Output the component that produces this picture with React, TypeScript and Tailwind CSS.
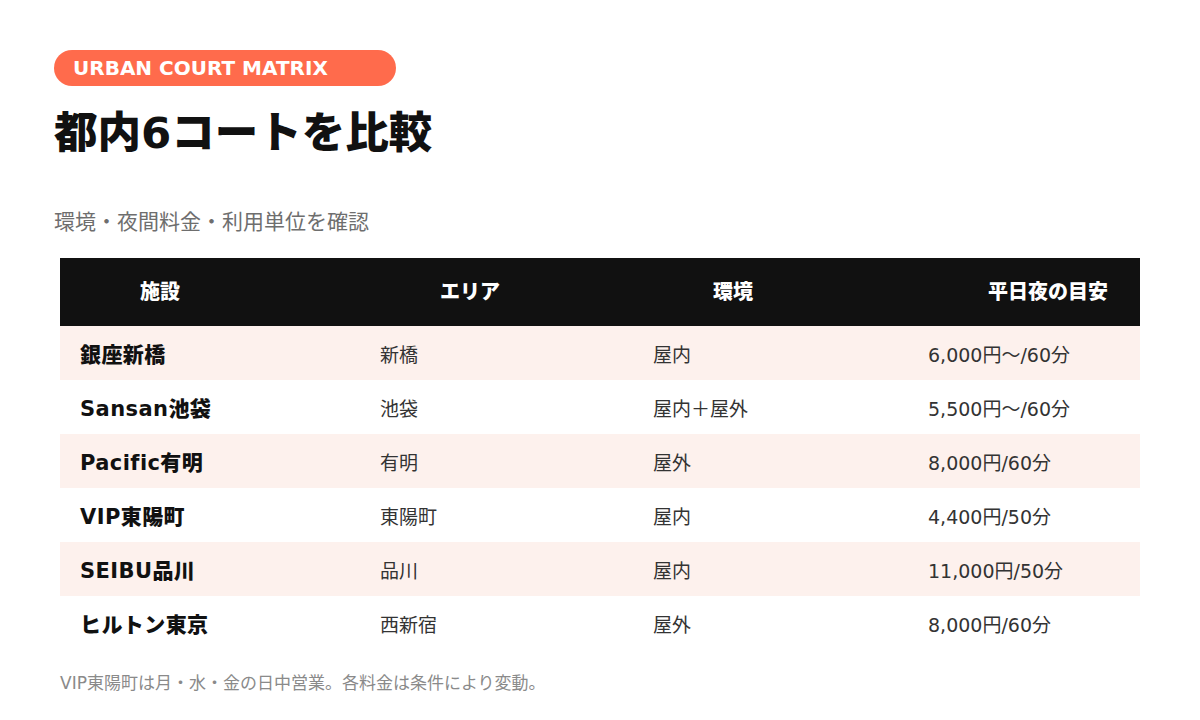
const rows = [
  { name: '銀座新橋', area: '新橋', env: '屋内', price: '6,000円〜/60分' },
  { name: 'Sansan池袋', area: '池袋', env: '屋内＋屋外', price: '5,500円〜/60分' },
  { name: 'Pacific有明', area: '有明', env: '屋外', price: '8,000円/60分' },
  { name: 'VIP東陽町', area: '東陽町', env: '屋内', price: '4,400円/50分' },
  { name: 'SEIBU品川', area: '品川', env: '屋内', price: '11,000円/50分' },
  { name: 'ヒルトン東京', area: '西新宿', env: '屋外', price: '8,000円/60分' },
]

const headers = ['施設', 'エリア', '環境', '平日夜の目安']

const font = {
  fontFamily: '"DejaVu Sans", "Noto Sans CJK JP", sans-serif',
}

const cols = 'grid grid-cols-[300px_273px_275px_232px]'

export default function App() {
  return (
    <div className="min-h-screen w-[1200px] bg-white px-[54px] pt-[50px]" style={font}>
      <div className="inline-flex h-9 w-[342px] items-center rounded-full bg-[#ff6b4c] pl-[19px]">
        <span className="text-[20px] font-bold text-white">URBAN COURT MATRIX</span>
      </div>

      <h1 className="mt-[21px] text-[43.5px] font-black leading-[52px] text-[#111111]">都内6コートを比較</h1>

      <p className="mt-[49px] text-[21px] leading-7 text-[#6e6e6e]">環境・夜間料金・利用単位を確認</p>

      <div className="ml-[6px] mt-[22px] w-[1080px]">
        <div className={`${cols} h-[68px] items-center bg-[#111111]`}>
          {headers.map((h) => (
            <div key={h} className="pl-20 text-[20px] font-black text-white">
              {h}
            </div>
          ))}
        </div>
        {rows.map((r, i) => (
          <div
            key={r.name}
            className={`${cols} h-[54px] items-center pt-[5px] ${i % 2 === 0 ? 'bg-[#fdf1ed]' : 'bg-white'}`}
          >
            <div className="pl-[20px] text-[21px] font-black tracking-[0.02em] text-[#111111]">{r.name}</div>
            <div className="pl-5 text-[19px] text-[#333333]">{r.area}</div>
            <div className="pl-5 text-[19px] text-[#333333]">{r.env}</div>
            <div className="pl-5 text-[19px] text-[#333333]">{r.price}</div>
          </div>
        ))}
      </div>

      <p className="ml-[6px] mt-[21px] text-[17px] text-[#8a8a8a]">
        VIP東陽町は月・水・金の日中営業。各料金は条件により変動。
      </p>
    </div>
  )
}
